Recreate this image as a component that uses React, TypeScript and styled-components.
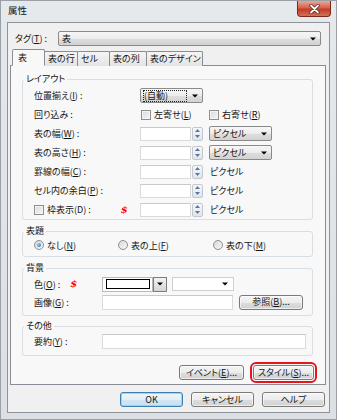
import React from "react";
import styled, { createGlobalStyle, css } from "styled-components";

const GlobalStyle = createGlobalStyle`
  html, body { margin: 0; padding: 0; background: #fff; }
  body {
    font-family: "Noto Sans CJK JP", "Noto Sans", sans-serif;
    font-size: 9px;
    color: #141414;
    font-feature-settings: "palt" 1;
  }
  * { box-sizing: border-box; }
`;

const Window = styled.div`
  width: 337px;
  height: 420px;
  background: linear-gradient(#e6e9ec, #dcdfe3);
  border: 1px solid #9aa0a6;
  display: flex;
  flex-direction: column;
`;

const TitleBar = styled.div`
  height: 21px;
  flex: none;
  display: flex;
  align-items: flex-start;
  justify-content: space-between;
  padding-left: 7px;
`;

const Title = styled.span`
  font-size: 9.5px;
  line-height: 18px;
`;

const CloseButton = styled.div`
  width: 34px;
  height: 16px;
  margin-right: 5px;
  border: 1px solid #7a2a1c;
  border-top: none;
  border-radius: 0 0 4px 4px;
  background: linear-gradient(#e9a797 0%, #d6634c 45%, #c23c22 55%, #d3705c 100%);
  display: flex;
  align-items: center;
  justify-content: center;
`;

const Client = styled.div`
  flex: 1;
  margin: 0 6px 6px 6px;
  background: #f0f0f0;
  border: 1px solid #8d9399;
  display: flex;
  flex-direction: column;
`;

const TagRow = styled.div`
  display: flex;
  align-items: center;
  height: 15px;
  margin: 8px 8px 0 7px;
`;

const TagLabel = styled.span`
  width: 43px;
  flex: none;
  white-space: nowrap;
`;

const Tabs = styled.div`
  display: flex;
  align-items: flex-end;
  height: 17px;
  margin: 3px 0 -1px 4px;
  position: relative;
  z-index: 1;
`;

const Tab = styled.div<{ $w: number; $active?: boolean }>`
  width: ${(p) => p.$w}px;
  height: 15px;
  margin-left: -1px;
  padding: 0 2px 0 3px;
  border: 1px solid #898c95;
  border-bottom: none;
  border-radius: 2px 2px 0 0;
  background: linear-gradient(#f5f5f5, #e4e4e4);
  white-space: nowrap;
  line-height: 14px;
  ${(p) =>
    p.$active &&
    css`
      height: 17px;
      margin-left: 0;
      padding-left: 5px;
      background: #f8f8f8;
      border-bottom: 1px solid #f8f8f8;
      line-height: 15px;
      z-index: 2;
    `}
`;

const Panel = styled.div`
  margin: 0 3px 0 2px;
  border: 1px solid #898c95;
  background: #f8f8f8;
  display: flex;
  flex-direction: column;
  padding-bottom: 4px;
`;

const Group = styled.fieldset<{ $mt: number; $pb: number }>`
  margin: ${(p) => p.$mt}px 12px 0 11px;
  padding: 0 0 ${(p) => p.$pb}px 0;
  border: 1px solid #d7dfe5;
  border-radius: 3px;
  min-width: 0;
`;

const Legend = styled.legend`
  margin-left: 1px;
  padding: 0 2px;
  line-height: 12px;
  font-size: 9px;
`;

const Rows = styled.div<{ $pt?: number }>`
  padding-top: ${(p) => p.$pt ?? 0}px;
  display: flex;
  flex-direction: column;
`;

const Row = styled.div<{ $h: number }>`
  display: flex;
  align-items: center;
  height: ${(p) => p.$h}px;
  padding-left: 11px;
`;

const Label = styled.span<{ $w: number }>`
  width: ${(p) => p.$w}px;
  flex: none;
  white-space: nowrap;
  display: flex;
  align-items: center;
`;

const Dollar = styled.span<{ $ml: number }>`
  margin-left: ${(p) => p.$ml}px;
  color: #f00;
  font-weight: bold;
  font-style: italic;
  font-family: "DejaVu Serif", serif;
  font-size: 10px;
  line-height: 10px;
`;

const Drop = styled.div<{ $w?: number }>`
  ${(p) => (p.$w ? css`width: ${p.$w}px; flex: none;` : css`flex: 1;`)}
  height: 15px;
  border: 1px solid #8a8a8a;
  border-radius: 2px;
  background: linear-gradient(#f7f7f7 0%, #ececec 50%, #dedede 51%, #d2d2d2 100%);
  display: flex;
  align-items: center;
  padding: 0 4px 0 3px;
  white-space: nowrap;
`;

const FocusText = styled.span`
  flex: 1;
  height: 12px;
  line-height: 10px;
  border: 1px dotted #222;
  margin-right: 5px;
  margin-left: -1px;
`;

const ArrowIcon = styled.svg`
  margin-left: auto;
  flex: none;
`;

const Arrow = () => (
  <ArrowIcon width="6" height="4" viewBox="0 0 6 4">
    <path d="M0 0.5h6L3 3.5z" fill="#000" />
  </ArrowIcon>
);

const CheckWrap = styled.span<{ $w?: number; $ml?: number }>`
  ${(p) => p.$w !== undefined && css`width: ${p.$w}px;`}
  margin-left: ${(p) => p.$ml ?? 0}px;
  flex: none;
  display: flex;
  align-items: center;
  white-space: nowrap;
`;

const Box = styled.span`
  width: 10px;
  height: 10px;
  flex: none;
  border: 1px solid #8f8f8f;
  background: linear-gradient(135deg, #d8d9dc, #f7f7f7);
  box-shadow: inset 0 0 0 1px #f4f4f4;
  margin-right: 3px;
`;

const Radio = styled.span<{ $on?: boolean }>`
  width: 10px;
  height: 10px;
  flex: none;
  border: 1px solid #8f8f8f;
  border-radius: 50%;
  background: linear-gradient(135deg, #d8d9dc, #f7f7f7);
  margin-right: 3px;
  display: flex;
  align-items: center;
  justify-content: center;
  &::after {
    content: "";
    width: 4px;
    height: 4px;
    border-radius: 50%;
    background: ${(p) => (p.$on ? "radial-gradient(circle at 35% 35%, #8fd0f5, #1b6eb0)" : "transparent")};
  }
`;

const TextBox = styled.span<{ $w: number; $h?: number }>`
  width: ${(p) => p.$w}px;
  height: ${(p) => p.$h ?? 14}px;
  flex: none;
  border: 1px solid #dadada;
  border-top-color: #c9c9c9;
  background: #fff;
`;

const SpinGroup = styled.span`
  display: flex;
  align-items: center;
  gap: 1px;
  flex: none;
`;

const Spin = styled.span`
  width: 11px;
  height: 14px;
  border: 1px solid #c4c8cd;
  border-radius: 2px;
  background: linear-gradient(#f6f8fa, #dfe5ec);
  display: flex;
  flex-direction: column;
  align-items: center;
  justify-content: space-around;
`;

const SpinArrow = ({ up }: { up?: boolean }) => (
  <svg width="5" height="3" viewBox="0 0 5 3">
    <path d={up ? "M0 3h5L2.5 0z" : "M0 0h5L2.5 3z"} fill="#5878a8" />
  </svg>
);

const SpinInput = () => (
  <SpinGroup>
    <TextBox $w={51} />
    <Spin>
      <SpinArrow up />
      <SpinArrow />
    </Spin>
  </SpinGroup>
);

const Unit = styled.span<{ $ml: number }>`
  margin-left: ${(p) => p.$ml}px;
  white-space: nowrap;
`;

const RadioRow = styled.div`
  display: flex;
  align-items: center;
  height: 16px;
  padding-left: 11px;
`;

const ColorPick = styled.span`
  display: flex;
  flex: none;
  height: 15px;
`;

const Swatch = styled.span`
  width: 51px;
  height: 15px;
  border: 1px solid #b8b8b8;
  background: #fff;
  display: flex;
  align-items: center;
  justify-content: center;
  &::after {
    content: "";
    width: 42px;
    height: 8px;
    border: 1px solid #000;
    background: #fff;
  }
`;

const SwatchArrow = styled.span`
  width: 14px;
  height: 15px;
  border: 1px solid #7d7d7d;
  background: linear-gradient(#f4f4f4, #d4d4d4);
  display: flex;
  align-items: center;
  justify-content: center;
`;

const WhiteDrop = styled.span<{ $w: number; $ml: number }>`
  width: ${(p) => p.$w}px;
  margin-left: ${(p) => p.$ml}px;
  height: 14px;
  flex: none;
  border: 1px solid #cfcfcf;
  background: #fff;
  display: flex;
  align-items: center;
  padding: 0 5px;
`;

const Button = styled.button<{ $w: number; $ml?: number; $default?: boolean; $marked?: boolean }>`
  width: ${(p) => p.$w}px;
  height: 15px;
  flex: none;
  margin: 0 0 0 ${(p) => p.$ml ?? 0}px;
  padding: 0;
  font: inherit;
  font-size: 9px;
  line-height: 12px;
  color: #141414;
  border: 1px solid #7a7a7a;
  border-radius: 3px;
  background: linear-gradient(#f4f4f4 0%, #ececec 50%, #dddddd 51%, #d1d1d1 100%);
  box-shadow: inset 0 0 0 1px rgba(255, 255, 255, 0.6);
  white-space: nowrap;
  ${(p) =>
    p.$default &&
    css`
      border-color: #3c7fb1;
      background: linear-gradient(#eef6fb 0%, #e2eff8 50%, #d2e6f4 51%, #c7e0f1 100%);
      box-shadow: inset 0 0 0 1px #9fd3f3;
    `}
  ${(p) =>
    p.$marked &&
    css`
      outline: 2px solid #e8141b;
      outline-offset: 1px;
    `}
`;

const PanelButtons = styled.div`
  display: flex;
  justify-content: flex-end;
  align-items: center;
  margin: 9px 11px 0 0;
  gap: 9px;
`;

const DialogButtons = styled.div`
  display: flex;
  justify-content: flex-end;
  gap: 8px;
  margin: 7px 4px 0 0;
`;

export default function App() {
  return (
    <>
      <GlobalStyle />
      <Window>
        <TitleBar>
          <Title>属性</Title>
          <CloseButton>
            <svg width="11" height="10" viewBox="0 0 11 10">
              <path d="M2 1.5l7 7M9 1.5l-7 7" stroke="#5a1a10" strokeWidth="3.2" strokeLinecap="round" />
              <path d="M2 1.5l7 7M9 1.5l-7 7" stroke="#fff" strokeWidth="1.8" strokeLinecap="round" />
            </svg>
          </CloseButton>
        </TitleBar>
        <Client>
          <TagRow>
            <TagLabel>
              タグ(<u>T</u>) :
            </TagLabel>
            <Drop>
              表
              <Arrow />
            </Drop>
          </TagRow>
          <Tabs>
            <Tab $w={33} $active>
              表
            </Tab>
            <Tab $w={34}>表の行</Tab>
            <Tab $w={33}>セル</Tab>
            <Tab $w={38}>表の列</Tab>
            <Tab $w={57}>表のデザイン</Tab>
          </Tabs>
          <Panel>
            <Group $mt={7} $pb={0}>
              <Legend>レイアウト</Legend>
              <Rows $pt={1}>
                <Row $h={19}>
                  <Label $w={106}>
                    位置揃え(<u>I</u>) :
                  </Label>
                  <Drop $w={63}>
                    <FocusText>(自動)</FocusText>
                    <Arrow />
                  </Drop>
                </Row>
                <Row $h={19}>
                  <Label $w={106}>回り込み :</Label>
                  <CheckWrap $w={68} $ml={1}>
                    <Box />
                    左寄せ(<u>L</u>)
                  </CheckWrap>
                  <CheckWrap>
                    <Box />
                    右寄せ(<u>R</u>)
                  </CheckWrap>
                </Row>
                <Row $h={19}>
                  <Label $w={106}>
                    表の幅(<u>W</u>) :
                  </Label>
                  <SpinInput />
                  <Drop $w={63} style={{ marginLeft: 6 }}>
                    ピクセル
                    <Arrow />
                  </Drop>
                </Row>
                <Row $h={19}>
                  <Label $w={106}>
                    表の高さ(<u>H</u>) :
                  </Label>
                  <SpinInput />
                  <Drop $w={63} style={{ marginLeft: 6 }}>
                    ピクセル
                    <Arrow />
                  </Drop>
                </Row>
                <Row $h={19}>
                  <Label $w={106}>
                    罫線の幅(<u>C</u>) :
                  </Label>
                  <SpinInput />
                  <Unit $ml={7}>ピクセル</Unit>
                </Row>
                <Row $h={19}>
                  <Label $w={106}>
                    セル内の余白(<u>P</u>) :
                  </Label>
                  <SpinInput />
                  <Unit $ml={7}>ピクセル</Unit>
                </Row>
                <Row $h={19}>
                  <Label $w={106}>
                    <Box />
                    枠表示(D) :<Dollar $ml={30}>$</Dollar>
                  </Label>
                  <SpinInput />
                  <Unit $ml={7}>ピクセル</Unit>
                </Row>
              </Rows>
            </Group>

            <Group $mt={5} $pb={3}>
              <Legend>表題</Legend>
              <RadioRow>
                <CheckWrap $w={84}>
                  <Radio $on />
                  なし(<u>N</u>)
                </CheckWrap>
                <CheckWrap $w={95}>
                  <Radio />
                  表の上(<u>F</u>)
                </CheckWrap>
                <CheckWrap>
                  <Radio />
                  表の下(<u>M</u>)
                </CheckWrap>
              </RadioRow>
            </Group>

            <Group $mt={5} $pb={4}>
              <Legend>背景</Legend>
              <Rows $pt={1}>
                <Row $h={18}>
                  <Label $w={68}>
                    色(<u>O</u>) :<Dollar $ml={10}>$</Dollar>
                  </Label>
                  <ColorPick>
                    <Swatch />
                    <SwatchArrow>
                      <svg width="6" height="4" viewBox="0 0 6 4">
                        <path d="M0 0.5h6L3 3.5z" fill="#000" />
                      </svg>
                    </SwatchArrow>
                  </ColorPick>
                  <WhiteDrop $w={62} $ml={5}>
                    <Arrow />
                  </WhiteDrop>
                </Row>
                <Row $h={18}>
                  <Label $w={68}>
                    画像(<u>G</u>) :
                  </Label>
                  <TextBox $w={131} $h={15} />
                  <Button $w={64} $ml={6}>
                    参照(<u>B</u>)...
                  </Button>
                </Row>
              </Rows>
            </Group>

            <Group $mt={4} $pb={5}>
              <Legend>その他</Legend>
              <Rows $pt={1}>
                <Row $h={17}>
                  <Label $w={68}>
                    要約(<u>Y</u>) :
                  </Label>
                  <TextBox $w={204} $h={15} />
                </Row>
              </Rows>
            </Group>

            <PanelButtons>
              <Button $w={65}>
                イベント(<u>E</u>)...
              </Button>
              <Button $w={61} $marked>
                スタイル(<u>S</u>)...
              </Button>
            </PanelButtons>
          </Panel>
          <DialogButtons>
            <Button $w={63} $default>
              OK
            </Button>
            <Button $w={63}>キャンセル</Button>
            <Button $w={63}>ヘルプ</Button>
          </DialogButtons>
        </Client>
      </Window>
    </>
  );
}
